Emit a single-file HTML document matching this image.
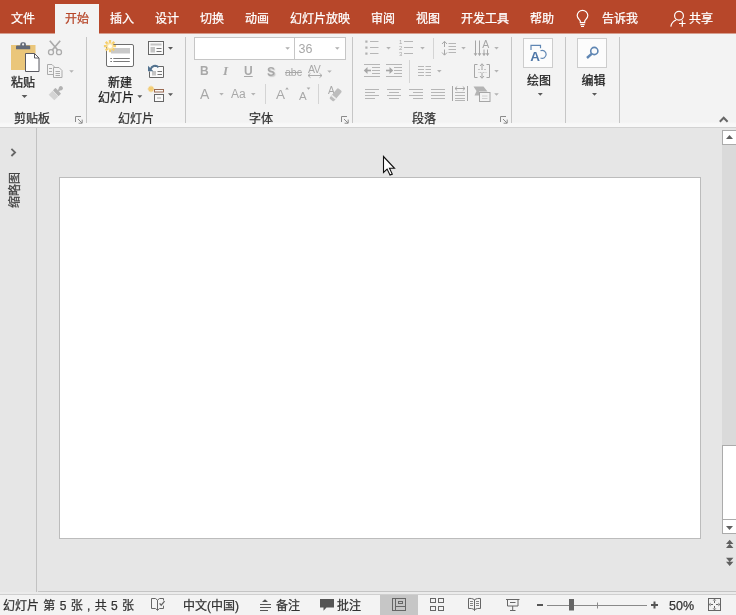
<!DOCTYPE html>
<html lang="zh-CN">
<head>
<meta charset="utf-8">
<title>PowerPoint</title>
<style>
html,body{margin:0;padding:0;}
body{width:736px;height:615px;overflow:hidden;position:relative;background:#e6e6e6;
 font-family:"Liberation Sans","Noto Sans CJK SC",sans-serif;font-size:12px;color:#1e1e1e;}
.abs,.t{position:absolute;}
.t{white-space:nowrap;line-height:16px;height:16px;-webkit-text-stroke:0.25px currentColor;}
#tabbar{position:absolute;left:0;top:0;width:736px;height:33px;background:#b7472a;border-bottom:1px solid #d59d8e;}
#tabbar .t{color:#fff;top:11px;}
#acttab{position:absolute;left:55px;top:4px;width:44px;height:30px;background:#f3f3f3;}
#ribbon{position:absolute;left:0;top:34px;width:736px;height:93px;background:linear-gradient(#f3f3f3 0,#f3f3f3 88px,#f8f8f8 90px,#f8f8f8 93px);border-bottom:1px solid #d2d2d2;}
.sep{position:absolute;top:37px;width:1px;height:86px;background:#c6c6c6;}
.gl{top:111px;color:#333;}
.g{color:#a8a8a8;-webkit-text-stroke:0 transparent;}
#left{position:absolute;left:0;top:128px;width:36px;height:464px;background:#e6e6e6;border-right:1px solid #c2c2c2;}
#slide{position:absolute;left:59px;top:177px;width:640px;height:360px;background:#fff;border:1px solid #bcbcbc;}
#status{position:absolute;left:0;top:594px;width:736px;height:21px;background:#f3f3f3;border-top:1px solid #cfcfcf;}
#status .t{top:3px;color:#333;}
svg{position:absolute;overflow:visible;}
</style>
</head>
<body>
<div id="wrap" style="position:absolute;left:0;top:0;width:736px;height:615px;will-change:transform;">
<!-- TAB BAR -->
<div id="tabbar">
 <div id="acttab"></div>
 <div class="t" style="left:11px;">文件</div>
 <div class="t" style="left:65px;color:#b7472a;">开始</div>
 <div class="t" style="left:110px;">插入</div>
 <div class="t" style="left:155px;">设计</div>
 <div class="t" style="left:200px;">切换</div>
 <div class="t" style="left:245px;">动画</div>
 <div class="t" style="left:290px;">幻灯片放映</div>
 <div class="t" style="left:371px;">审阅</div>
 <div class="t" style="left:416px;">视图</div>
 <div class="t" style="left:461px;">开发工具</div>
 <div class="t" style="left:530px;">帮助</div>
 <div class="t" style="left:602px;">告诉我</div>
 <div class="t" style="left:689px;">共享</div>
</div>
<!-- RIBBON -->
<div id="ribbon"></div>
<div class="sep" style="left:86px;"></div>
<div class="sep" style="left:185px;"></div>
<div class="sep" style="left:352px;"></div>
<div class="sep" style="left:511px;"></div>
<div class="sep" style="left:565px;"></div>
<div class="sep" style="left:619px;"></div>
<div class="t gl" style="left:14px;">剪贴板</div>
<div class="t gl" style="left:118px;">幻灯片</div>
<div class="t gl" style="left:249px;">字体</div>
<div class="t gl" style="left:412px;">段落</div>
<div class="t" style="left:11px;top:75px;">粘贴</div>
<div class="t" style="left:108px;top:75px;">新建</div>
<div class="t" style="left:98px;top:90px;">幻灯片</div>
<div class="t" style="left:527px;top:73px;">绘图</div>
<div class="t" style="left:581.5px;top:73px;">编辑</div>



<!-- LEFT -->
<div id="left"></div>
<!-- SLIDE -->
<div id="slide"></div>
<div class="abs" style="left:38px;top:591px;width:698px;height:1px;background:#c4c4c4;"></div>
<div class="abs" style="left:0;top:592px;width:736px;height:2px;background:#ebebeb;"></div>
<!-- STATUS -->
<div id="status">
 <div class="t" style="left:3px;word-spacing:1px;">幻灯片 第 5 张 , 共 5 张</div>
 <div class="t" style="left:183px;">中文(中国)</div>
 <div class="t" style="left:276px;">备注</div>
 <div class="t" style="left:337px;">批注</div>
 <div class="t" style="left:669px;font-size:12.5px;">50%</div>
</div>

<!-- ribbon text glyphs -->
<div class="abs" style="left:194px;top:37px;width:99px;height:21px;background:#fff;border:1px solid #c6c6c6;"></div>
<div class="abs" style="left:294px;top:37px;width:50px;height:21px;background:#fff;border:1px solid #c6c6c6;"></div>
<div class="t g" style="left:298.5px;top:41px;font-size:12.5px;">36</div>
<div class="t g" style="left:200px;top:63px;font-weight:bold;">B</div>
<div class="t g" style="left:223px;top:63px;font-family:'Liberation Serif',serif;font-style:italic;font-weight:bold;font-size:13px;">I</div>
<div class="t g" style="left:244px;top:63px;font-weight:bold;text-decoration:underline;">U</div>
<div class="t g" style="left:267px;top:64px;font-weight:bold;text-shadow:1px 1px 1px #ccc;">S</div>
<div class="t g" style="left:285px;top:64px;font-size:10.5px;text-decoration:line-through;">abc</div>
<div class="t g" style="left:308px;top:61px;font-size:10.5px;letter-spacing:-0.5px;">AV</div>
<div class="t g" style="left:200px;top:86px;font-size:14px;">A</div>
<div class="t g" style="left:231px;top:86px;">Aa</div>
<div class="t g" style="left:276px;top:87px;font-size:13.5px;">A</div>
<div class="t g" style="left:299px;top:88px;font-size:11.5px;">A</div>
<div class="t g" style="left:328px;top:83px;font-size:10px;">A</div>
<div class="t g" style="left:399px;top:39px;font-size:6px;line-height:6px;height:18px;white-space:pre;">1
2
3</div>
<div class="t" style="left:9px;top:182px;width:36px;text-align:center;transform:rotate(-90deg);transform-origin:center;margin-left:-12px;color:#444;">缩略图</div>
<!-- ICON LAYER -->
<svg id="icons" width="736" height="615" viewBox="0 0 736 615" style="left:0;top:0;">
<!-- tab bar icons -->
<g fill="none" stroke="#fff" stroke-width="1.2">
 <path d="M580.3 22.6 v-1.4 c0-1.600 -3.100-2.600 -3.100-5.600 a5.300 5.300 0 0 1 10.600 0 c0 3 -3.100 4 -3.100 5.600 V22.600 Z"/>
 <path d="M580.300 24.600 h4.400 M581 26.500 h3"/>
 <circle cx="679" cy="15.800" r="4.400"/>
 <path d="M670.8 26.6 c0.6-3.4 2.6-5.6 5.4-6.6"/>
 <path d="M679 23.5 h6.6 M682.3 20.2 v6.6"/>
</g>
<!-- paste -->
<rect x="11" y="45" width="24.5" height="25" fill="#eac67a"/>
<path d="M16 49.200 v-2.700 q0-1 1-1 h3.300 v-1.300 q0-2 2-2 h1.600 q2 0 2 2 v1.300 h3.300 q1 0 1 1 v2.700 Z" fill="#636a78"/>
<circle cx="23.1" cy="44.4" r="1.1" fill="#f3f3f3"/>
<path d="M25.5 53.5 h9 l4.5 4.5 v13.5 h-13.5 Z" fill="#fff" stroke="#5a5a62" stroke-width="1"/>
<path d="M34.5 53.5 v4.5 h4.5" fill="none" stroke="#5a5a62" stroke-width="1"/>
<path d="M21.6 95 h5.8 l-2.9 3 Z" fill="#5a5a5a"/>
<!-- scissors -->
<g fill="none" stroke="#ababab" stroke-width="1.3">
 <circle cx="51" cy="52.200" r="2.500"/><circle cx="59" cy="52.200" r="2.500"/>
 <path d="M52.300 50 L60.200 40.800 M57.700 50 L49.800 40.800" stroke-width="1.700"/>
</g>
<!-- copy -->
<g fill="#f3f3f3" stroke="#ababab" stroke-width="1">
 <path d="M47.5 64.5 h4.5 l2.5 2.5 v7.5 h-7 Z"/>
 <path d="M53.5 67.5 h5.5 l3 3 v7 h-8.5 Z"/>
 <path d="M49 68.5 h3 M49 71.5 h3 M55.5 71.5 h4.5 M55.5 73.5 h4.5 M55.5 75.5 h4.5" fill="none"/>
</g>
<path d="M69.2 70.3 h4.6 l-2.3 2.5 Z" fill="#b4b4b4"/>
<!-- format painter -->
<g transform="translate(57 92) rotate(-45)">
 <rect x="-7.800" y="-4" width="5.600" height="8" fill="#d4d4d4"/>
 <rect x="-1.800" y="-4" width="3.600" height="8" rx="0.600" fill="#b2b2b2"/>
 <rect x="1.500" y="-1" width="3" height="2" fill="#b8b8b8"/>
 <circle cx="5.400" cy="0" r="2.100" fill="#b2b2b2"/>
</g>
<!-- dialog launchers -->
<g fill="none" stroke="#8a8a8a" stroke-width="1">
 <path d="M75.5 122 v-5.5 h5.5"/><path d="M78 119 l4 4 M82.2 119.6 v3.6 h-3.6"/>
 <path d="M341.5 122 v-5.5 h5.5"/><path d="M344 119 l4 4 M348.2 119.6 v3.6 h-3.6"/>
 <path d="M500.5 122 v-5.5 h5.5"/><path d="M503 119 l4 4 M507.2 119.6 v3.6 h-3.6"/>
</g>
<!-- new slide -->
<rect x="106.5" y="44.5" width="27" height="22" rx="1.5" fill="#fff" stroke="#6e6e6e" stroke-width="1"/>
<rect x="111" y="48" width="19" height="5.5" fill="#c9c9c9"/>
<path d="M110.3 58.5 h1.7 M113.3 58.5 h16.5 M110.3 61.5 h1.7 M113.3 61.5 h16.5" stroke="#7a7a7a" stroke-width="1" fill="none"/>
<g stroke="#f5cf6e" stroke-width="2.300" fill="none">
 <path d="M110 40.1 v12.2 M103.9 46.2 h12.2 M105.7 41.9 l8.6 8.6 M114.3 41.9 l-8.6 8.6"/>
</g>
<circle cx="110" cy="46.200" r="3.400" fill="#fae3a4"/><circle cx="110" cy="46.200" r="2" fill="#fffdf6"/>
<path d="M137.3 95.3 h5 l-2.5 2.7 Z" fill="#5a5a5a"/>
<!-- layout -->
<rect x="148.5" y="41.5" width="15" height="13" fill="#fafafa" stroke="#666" stroke-width="1"/>
<rect x="150.5" y="43.5" width="11" height="2" fill="#c4c4c4"/>
<rect x="150.5" y="47" width="4.5" height="5.5" fill="#c4c4c4"/>
<path d="M156.5 48.5 h5 M156.5 51.5 h5" stroke="#777" stroke-width="1"/>
<path d="M168 47 h5 l-2.5 2.7 Z" fill="#5a5a5a"/>
<!-- reset -->
<path d="M155 66.5 h8.5 v11 h-14 v-6" fill="#fafafa" stroke="#666" stroke-width="1"/>
<rect x="152" y="71" width="4" height="4.5" fill="#c4c4c4"/>
<path d="M157.5 71.5 h4.5 M157.5 74.5 h4.5" stroke="#777" stroke-width="1"/>
<path d="M150.500 69.500 c1-3.400 5-5 8-2.300" fill="none" stroke="#52728f" stroke-width="2"/>
<path d="M148 65.800 v5.400 h5.400 Z" fill="#52728f"/>
<!-- section -->
<g stroke="#f3cc72" stroke-width="1.300" fill="none">
 <path d="M151 85.800 v6.400 M147.800 89 h6.400 M148.800 86.800 l4.400 4.400 M153.200 86.800 l-4.400 4.400"/>
</g>
<rect x="154.500" y="89.500" width="9" height="2.500" fill="#fafafa" stroke="#9a6a52" stroke-width="1"/>
<rect x="154.5" y="94.5" width="9" height="7" fill="#fafafa" stroke="#666" stroke-width="1"/>
<rect x="157" y="97" width="4" height="2" fill="#d0d0d0"/>
<path d="M168 93.3 h5 l-2.5 2.7 Z" fill="#5a5a5a"/>
<!-- font combo arrows -->
<path d="M285.3 47.3 h4.6 l-2.3 2.5 Z M335 47.3 h4.6 l-2.3 2.5 Z" fill="#b0b0b0"/>
<!-- font row arrows -->
<path d="M327.2 70.4 h4.6 l-2.3 2.4 Z M219.2 93 h4.6 l-2.3 2.4 Z M251 93 h4.6 l-2.3 2.4 Z" fill="#b4b4b4"/>
<!-- AV arrow -->
<path d="M308 75.5 h14 M310.5 73.3 l-2.5 2.2 l2.5 2.2 M319.5 73.3 l2.5 2.2 l-2.5 2.2" fill="none" stroke="#ababab" stroke-width="1"/>
<!-- font separators -->
<path d="M265.5 84 v20 M318.5 84 v20" stroke="#d4d4d4" stroke-width="1"/>
<!-- grow/shrink triangles -->
<path d="M285.2 89.6 h3.6 l-1.8-2.3 Z M306.6 87.4 h3.8 l-1.9 2.3 Z" fill="#ababab"/>
<!-- clear formatting eraser -->
<g transform="translate(335.8 94.6) rotate(-50)"><rect x="-7" y="-2.800" width="13.500" height="5.600" rx="1.300" fill="#bdbdbd"/><rect x="-4.200" y="-2.800" width="1.800" height="5.600" fill="#ededed"/></g>
<!-- paragraph: bullets -->
<g fill="#b0b0b0"><rect x="365.3" y="40.5" width="2.2" height="2.2"/><rect x="365.3" y="46.5" width="2.2" height="2.2"/><rect x="365.3" y="52.5" width="2.2" height="2.2"/></g>
<path d="M370 41.5 h8.5 M370 47.5 h8.5 M370 53.5 h8.5" stroke="#b6b6b6" stroke-width="1"/>
<path d="M386.2 47 h4.6 l-2.3 2.5 Z M420.2 47 h4.6 l-2.3 2.5 Z" fill="#b4b4b4"/>
<!-- numbering -->
<path d="M404 41.5 h9 M404 47.5 h9 M404 53.5 h9" stroke="#b6b6b6" stroke-width="1"/>
<!-- decrease indent -->
<path d="M364 64.5 h16 M372 67.5 h8 M372 70.5 h8 M372 73.5 h8 M364 76.5 h16" stroke="#b6b6b6" stroke-width="1"/>
<path d="M366 70.5 h5" fill="none" stroke="#a6a6a6" stroke-width="1.6"/><path d="M363.8 70.5 l3.7-3.4 v6.8 Z" fill="#a6a6a6"/>
<!-- increase indent -->
<path d="M386 64.5 h16 M394 67.5 h8 M394 70.5 h8 M394 73.5 h8 M386 76.5 h16" stroke="#b6b6b6" stroke-width="1"/>
<path d="M386 70.5 h5" fill="none" stroke="#a6a6a6" stroke-width="1.6"/><path d="M393.2 70.5 l-3.700-3.400 v6.800 Z" fill="#a6a6a6"/>
<!-- para separators -->
<path d="M409.5 60 v23 M433.5 38 v21" stroke="#d4d4d4" stroke-width="1"/>
<!-- columns -->
<path d="M418 66.5 h6 M425.5 66.5 h5.5 M418 69.5 h6 M425.5 69.5 h5.5 M418 72.5 h6 M425.5 72.5 h5.5 M418 75.5 h6 M425.5 75.5 h5.5" stroke="#b6b6b6" stroke-width="1"/>
<path d="M437 70 h4.6 l-2.3 2.5 Z" fill="#b4b4b4"/>
<!-- align L C R J -->
<path d="M365 89.5 h14 M365 92.5 h10 M365 95.5 h14 M365 98.5 h10" stroke="#b6b6b6" stroke-width="1"/>
<path d="M387 89.5 h14 M389 92.5 h10 M387 95.5 h14 M389 98.5 h10" stroke="#b6b6b6" stroke-width="1"/>
<path d="M409 89.5 h14 M413 92.5 h10 M409 95.5 h14 M413 98.5 h10" stroke="#b6b6b6" stroke-width="1"/>
<path d="M431 89.5 h14 M431 92.5 h14 M431 95.5 h14 M431 98.5 h14" stroke="#b6b6b6" stroke-width="1"/>
<!-- distributed -->
<path d="M452.5 86 v15 M467.5 86 v15" stroke="#a6a6a6" stroke-width="1"/>
<path d="M455 92.5 h10 M455 95.5 h10 M455 98.5 h10 M455 100.5 h10" stroke="#b6b6b6" stroke-width="1"/>
<path d="M455 88.5 h10 M457.2 86.5 l-2.2 2 l2.2 2 M462.8 86.5 l2.2 2 l-2.2 2" fill="none" stroke="#a6a6a6" stroke-width="1"/>
<!-- smartart -->
<path d="M473.5 86.5 h10 l4 5 h-8.5 v4 h-4.5 l2-4.5 Z" fill="#b4b4b4"/>
<rect x="479.5" y="92.5" width="10.5" height="9" fill="#f3f3f3" stroke="#a6a6a6" stroke-width="1"/>
<path d="M482 96 h5.5 M482 98.5 h5.5" stroke="#d0d0d0" stroke-width="1"/>
<path d="M494.2 93.3 h4.6 l-2.3 2.5 Z M494.2 70 h4.6 l-2.3 2.5 Z M494.2 47 h4.6 l-2.3 2.5 Z M461.2 47 h4.6 l-2.3 2.5 Z" fill="#b4b4b4"/>
<!-- line spacing -->
<path d="M444.5 41.5 v5.5 M444.5 49.5 v5.5 M442 44 l2.5-2.7 l2.5 2.7 M442 52.5 l2.5 2.7 l2.5-2.7" fill="none" stroke="#a6a6a6" stroke-width="1"/>
<path d="M448.5 43.5 h7.5 M448.5 46.5 h7.5 M448.5 49.5 h7.5 M448.5 52.5 h7.5" stroke="#b6b6b6" stroke-width="1"/>
<!-- text direction -->
<path d="M475.5 40.5 v15 M479.5 40.5 v15 M484 49.5 v6 M487.5 49.5 v6" stroke="#a6a6a6" stroke-width="1"/>
<path d="M474 53.6 l1.5 2 l1.5-2 Z M478 53.6 l1.5 2 l1.5-2 Z M482.5 53.6 l1.5 2 l1.5-2 Z M486 53.6 l1.5 2 l1.5-2 Z" fill="#a6a6a6" stroke="#a6a6a6" stroke-width="0.5"/>
<text x="482.2" y="48" font-family="Liberation Sans, sans-serif" font-size="10.5" fill="#a6a6a6">A</text>
<!-- align text -->
<path d="M477.5 64.5 h-3 v13 h3 M486.5 64.5 h3 v13 h-3" fill="none" stroke="#a6a6a6" stroke-width="1"/>
<path d="M482 64 v5 M480 66 l2-2.3 l2 2.3 M482 73 v5 M480 76 l2 2.3 l2-2.3" fill="none" stroke="#a6a6a6" stroke-width="1"/>
<path d="M478 69.500 h8.500" stroke="#c4c4c4" stroke-width="1" stroke-dasharray="2 1"/><path d="M478 72.500 h8.500" stroke="#c4c4c4" stroke-width="1" stroke-dasharray="2 1" stroke-dashoffset="1.500"/>
<!-- drawing / editing big buttons -->
<rect x="523.5" y="38.5" width="29" height="29" fill="#fcfcfc" stroke="#cdcdcd" stroke-width="1"/>
<rect x="577.5" y="38.5" width="29" height="29" fill="#fcfcfc" stroke="#cdcdcd" stroke-width="1"/>
<path d="M531 50 v-4.7 h9.5 v3" fill="none" stroke="#5f86b3" stroke-width="1.2"/>
<text x="530.3" y="60.6" font-family="Liberation Sans, sans-serif" font-weight="bold" font-size="13.5" fill="#5078a8">A</text>
<path d="M540.5 50.7 a4 4 0 1 1 0 7.3" fill="none" stroke="#5f86b3" stroke-width="1.2"/>
<g fill="none" stroke="#5f86b3">
 <circle cx="594.3" cy="51" r="3.6" stroke-width="1.6"/>
 <path d="M591.6 53.8 l-4.6 4.2" stroke-width="2.4"/>
</g>
<path d="M537.8 93 h5 l-2.5 2.7 Z M592 93 h5 l-2.5 2.7 Z" fill="#5a5a5a"/>
<!-- ribbon collapse chevron -->
<path d="M719.8 121.8 l3.9-4 l3.9 4" fill="none" stroke="#666" stroke-width="2"/>
<!-- left panel chevron -->
<path d="M11.4 148.800 l3.700 3.600 l-3.700 3.600" fill="none" stroke="#666" stroke-width="1.800"/>
<!-- scrollbar -->
<rect x="722" y="130" width="14" height="404" fill="#dadada"/>
<rect x="722.5" y="130.5" width="14" height="14" fill="#fff" stroke="#ababab" stroke-width="1"/>
<path d="M726 139 h7 l-3.5-4 Z" fill="#606060"/>
<rect x="722.5" y="445.5" width="14" height="74" fill="#fff" stroke="#ababab" stroke-width="1"/>
<rect x="722.5" y="519.5" width="14" height="14" fill="#fff" stroke="#ababab" stroke-width="1"/>
<path d="M726 526 h7 l-3.5 4 Z" fill="#606060"/>
<path d="M726 544 h7.400 l-3.700-4.200 Z M726 548 h7.400 l-3.700-4.200 Z" fill="#606060"/>
<path d="M726 557.800 h7.400 l-3.700 4.200 Z M726 561.800 h7.400 l-3.700 4.200 Z" fill="#606060"/>
<!-- cursor -->
<path d="M383.5 156.5 v16 l3.6-3.4 l2.9 6 l2.3-1 l-2.8-5.8 h5 Z" fill="#fff" stroke="#111" stroke-width="1.1" stroke-linejoin="miter"/>
<!-- status bar icons -->
<rect x="380" y="595" width="38" height="20" fill="#c6c6c6"/>
<g fill="none" stroke="#666" stroke-width="1">
 <path d="M157.500 600.200 l-2-1.700 h-4 v10 h4 l2 1.800 l2-1.800 h4 v-2.800 M157.500 600.200 v10 M157.500 600.200 l2-1.700 h4 v2"/>
 <path d="M159.600 603.300 l1.600 1.900 l3.400-4.100" stroke-width="1.300"/>
</g>
<path d="M262 602 h6 l-3-2.8 Z" fill="#555"/>
<path d="M260 604.5 h11 M260 607.5 h11 M260 610.5 h8" stroke="#555" stroke-width="1"/>
<path d="M320 599 h14 v8.5 h-7.5 l-3 3.3 v-3.3 h-3.5 Z" fill="#555"/>
<g fill="none" stroke="#666" stroke-width="1">
 <rect x="392.5" y="598.5" width="13" height="12"/>
 <path d="M395.5 598.5 v12 M395.5 606.5 h10"/>
 <rect x="398.5" y="601.5" width="4" height="2"/>
 <rect x="430.5" y="598.5" width="5" height="4"/><rect x="438.5" y="598.5" width="5" height="4"/>
 <rect x="430.5" y="606.5" width="5" height="4"/><rect x="438.5" y="606.5" width="5" height="4"/>
 <path d="M474.5 599.8 c-2-1.4-4-1.5-6-1.3 v10 c2-0.2 4-0.1 6 1.3 c2-1.4 4-1.5 6-1.3 v-10 c-2-0.2-4-0.1-6 1.3 Z M474.5 599.8 v11"/>
 <path d="M470 601.5 h3 M470 603.5 h3 M470 605.5 h3 M476 601.5 h3 M476 603.5 h3 M476 605.5 h3" stroke-width="0.8"/>
 <path d="M506 599.5 h13.5 M507.5 599.5 v6.5 h10.5 v-6.5 M510 602.5 h5.5 M512.7 606 v4.5 M510 610.5 h5.5"/>
</g>
<path d="M537 605 h6" stroke="#555" stroke-width="2"/>
<path d="M547 605.5 h100 M597.5 602.5 v6" stroke="#8a8a8a" stroke-width="1"/>
<rect x="569" y="599" width="5" height="11.5" fill="#666"/>
<path d="M651 605 h7 M654.5 601.5 v7" stroke="#555" stroke-width="2"/>
<g fill="none" stroke="#666" stroke-width="1">
 <rect x="708.5" y="598.5" width="12" height="12"/>
</g>
<path d="M712.5 600.5 l2-1.5 l2 1.5 Z M712.5 608.5 l2 1.5 l2-1.5 Z M710.5 602.5 l-1.5 2 l1.5 2 Z M718.5 602.5 l1.5 2 l-1.5 2 Z" fill="#666"/>
<path d="M714.5 601 v2 M714.5 606 v2 M711 604.5 h2 M716 604.5 h2" stroke="#666" stroke-width="1"/>
</svg>
</div>
</body>
</html>
